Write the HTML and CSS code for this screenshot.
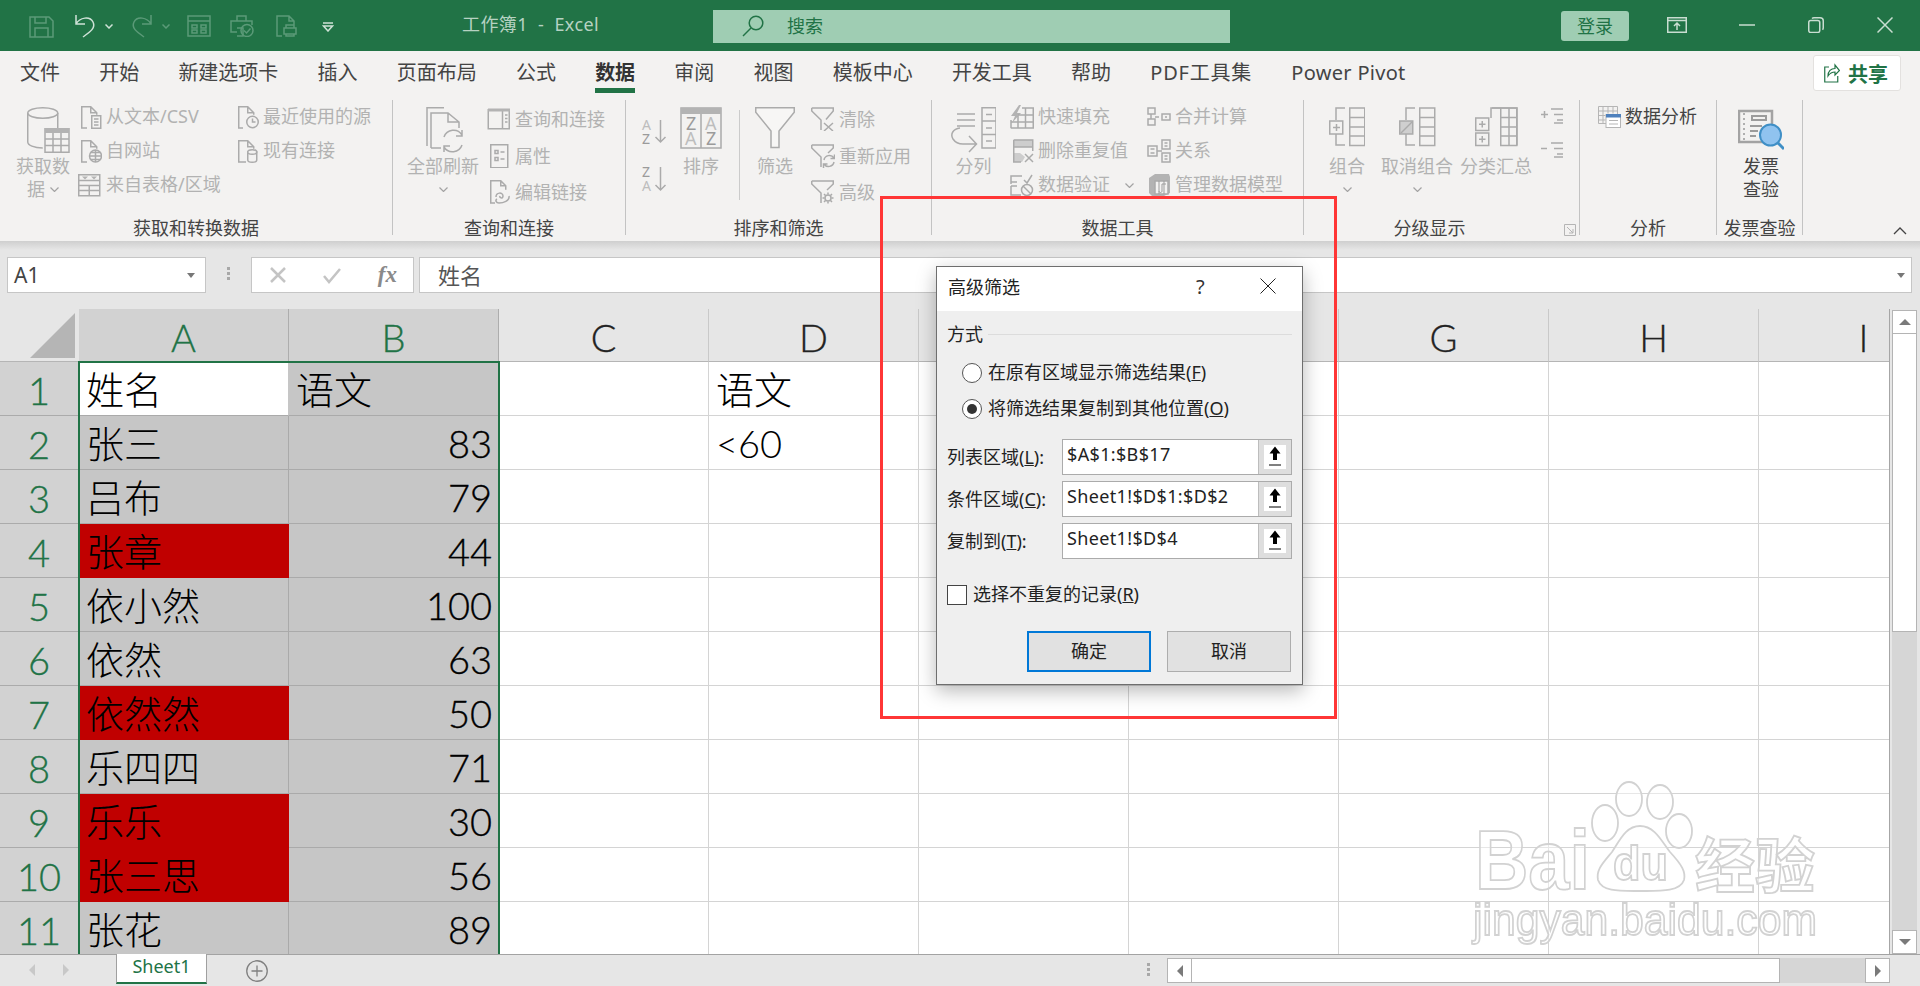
FILE: index.html
```html
<!DOCTYPE html>
<html lang="zh-CN">
<head>
<meta charset="utf-8">
<title>工作簿1 - Excel</title>
<link rel="stylesheet" href="styles.css">
</head>
<body>
<div class="app">
  <header class="titlebar">
    <svg class="qi dim q-save" viewBox="0 0 25 22"><path d="M1 1h19l4 4v16H1z M6 1v6h11V1 M6 21v-9h13v9"/></svg>
    <svg class="qi lit q-undo" viewBox="0 0 23 24"><path d="M3 1v9h9 M3 10C7 3 17 2 20 8c3 6-3 10-10 15"/></svg>
    <svg class="qc lit q-c1" viewBox="0 0 8 5"><path d="M.5.5L4 4 7.5.5"/></svg>
    <svg class="qi dim q-redo" viewBox="0 0 23 24"><path d="M20 1v9h-9 M20 10C16 3 6 2 3 8c-3 6 3 10 10 15"/></svg>
    <svg class="qc dim q-c2" viewBox="0 0 8 5"><path d="M.5.5L4 4 7.5.5"/></svg>
    <svg class="qi dim q-form" viewBox="0 0 24 22"><path d="M1 1h22v20H1z M1 6h22 M5 10h5v3H5z M14 10h5v3h-5z M5 15h5v3H5z M14 15h5v3h-5z"/></svg>
    <svg class="qi dim q-print" viewBox="0 0 24 22"><path d="M7 6V1h9v5 M7 17H1V6h21v4 M7 13h6v8H7"/><circle cx="17" cy="15.500" r="6"/><path d="M14 15.500l2.500 2.500 4-4.500"/></svg>
    <svg class="qi dim q-prev" viewBox="0 0 21 22"><path d="M8 1H1v20h5 M8 1h5l5 5v4 M13 1v5h5 M8 13h12v6H8z M10 13v-3h8v3 M10 19v2h8v-2"/></svg>
    <svg class="qc2 q-cust" viewBox="0 0 12 10"><path class="qline" d="M1 1h10"/><path class="qtri" d="M1.500 4h9L6 9z"/></svg>
    <div class="wintitle">工作簿1  -  Excel</div>
    <div class="search">
      <svg class="search-ic" viewBox="0 0 22 22"><circle cx="14" cy="8" r="6.800"/><path d="M9 13L1 21"/></svg>
      <span>搜索</span>
    </div>
    <div class="login">登录</div>
    <svg class="wi w-disp" viewBox="0 0 20 16"><path d="M.750.750h18.500v14.500H.750z M.750 3.500h18.500 M10 13V6.500 M7 9l3-3 3 3"/></svg>
    <svg class="wi w-min" viewBox="0 0 16 16"><path d="M0 8h16"/></svg>
    <svg class="wi w-res" viewBox="0 0 16 16"><rect x=".75" y="3.500" width="11" height="12" rx="2"/><path d="M4 1.500c.5-.5 1-.75 2-.75h6c2 0 3.250 1.250 3.250 3v7c0 1-.25 1.500-.75 2"/></svg>
    <svg class="wi w-close" viewBox="0 0 16 16"><path d="M.5.5l15 15 M15.500.5l-15 15"/></svg>
  </header>

  <nav class="tabs">
    <span class="tab">文件</span>
    <span class="tab">开始</span>
    <span class="tab">新建选项卡</span>
    <span class="tab">插入</span>
    <span class="tab">页面布局</span>
    <span class="tab">公式</span>
    <span class="tab active">数据</span>
    <span class="tab">审阅</span>
    <span class="tab">视图</span>
    <span class="tab">模板中心</span>
    <span class="tab">开发工具</span>
    <span class="tab">帮助</span>
    <span class="tab t-pdf">PDF工具集</span>
    <span class="tab t-pp">Power Pivot</span>
    <div class="share">
      <svg class="share-ic" viewBox="0 0 16 20"><path d="M5 4H.75v15h13v-6 M4 13c0-5 3-7.500 7-7.500V2l4.500 5.500L11 12V9c-3 0-5 1-7 4z"/></svg>
      <span>共享</span>
    </div>
  </nav>

  <section class="ribbon">
    <div class="group g1">
      <div class="gbody">
        <div class="big b-get">
          <svg class="ic" width="54" height="49" viewBox="0 0 54 49"><path d="M11.750 6v29c0 3 6 6 15 6 M41.750 6v15"/><ellipse cx="26.750" cy="6" rx="15" ry="5.250"/><rect x="29" y="21.750" width="24" height="23.500" class="pane"/><path class="solid" d="M29 21h24v5H29z"/><path d="M29 32h24 M29 38.500h24 M37 26v19 M45 26v19"/></svg>
          <span class="bt">获取数</span>
          <span class="bt">据 <svg class="chev" viewBox="0 0 9 5"><path d="M.5.5L4.500 4.500 8.500.5"/></svg></span>
        </div>
        <div class="col c-g1a">
          <div class="ri"><svg class="ic" width="24" height="24" viewBox="0 0 24 24"><path d="M9 23H3.750V1.750h9l6 6v2 M12.750 1.750v6h6"/><rect x="13.750" y="10.750" width="9" height="12.500" class="pane"/><path d="M16 14h4.500 M16 17h4.500 M16 20h4.500"/></svg><span>从文本/CSV</span></div>
          <div class="ri"><svg class="ic" width="24" height="24" viewBox="0 0 24 24"><path d="M9 23H3.750V1.750h9l6 6v2 M12.750 1.750v6h6"/><circle cx="17.500" cy="17" r="6" class="pane"/><path d="M11.500 17h12 M17.500 11v12 M13 13.500h9 M13 20.500h9"/></svg><span>自网站</span></div>
          <div class="ri"><svg class="ic" width="24" height="24" viewBox="0 0 24 24"><path d="M.750 1.750h21v21h-21z M.750 7.500h21 M.750 12.500h21 M.750 17.500h21 M11.250 12.500v10"/><path class="solid" d="M4 3.500h6L7 6.500z M13 3.500h6L16 6.500z"/></svg><span>来自表格/区域</span></div>
        </div>
        <div class="col c-g1b">
          <div class="ri r21"><svg class="ic" width="21" height="24" viewBox="0 0 21 24"><path d="M5 23H.75V1.750h9l6 6v2 M9.750 1.750v6h6"/><circle cx="14.500" cy="17" r="5.750" class="pane"/><path d="M14.500 13.500V17h3"/></svg><span>最近使用的源</span></div>
          <div class="ri r21"><svg class="ic" width="21" height="24" viewBox="0 0 21 24"><path d="M8 23H.75V1.750h9l6 6v2 M9.750 1.750v6h6"/><path class="pane" d="M9.750 13v8c0 1.500 2 2.250 4.500 2.250s4.500-.75 4.500-2.250v-8z"/><ellipse cx="14.250" cy="13" rx="4.500" ry="2.250" class="pane"/></svg><span>现有连接</span></div>
        </div>
      </div>
      <div class="glabel">获取和转换数据</div>
    </div>

    <div class="group g2">
      <div class="gbody">
        <div class="big b-refresh">
          <svg class="ic" width="72" height="49" viewBox="0 0 72 49"><path d="M20 39V.75h17 M24 41V6h17l11 9v6 M41 6v9h11 M24 41h10"/><path d="M37 30a10 10 0 0 1 18-2 M55 38a10 10 0 0 1-18 2 M55 23v6h-6 M37 45v-6h6"/></svg>
          <span class="bt">全部刷新</span>
          <span class="bt"><svg class="chev" viewBox="0 0 9 5"><path d="M.5.5L4.500 4.500 8.500.5"/></svg></span>
        </div>
        <div class="col c-g2 sp">
          <div class="ri"><svg class="ic" width="24" height="24" viewBox="0 0 24 24"><path d="M1.250 2.750h21v19h-21z M15.500 3v19"/><path class="solid" d="M1 1.500h22v3H1z"/><path d="M18 8h2.500 M18 11.500h2.500 M18 15h2.500"/></svg><span>查询和连接</span></div>
          <div class="ri"><svg class="ic" width="24" height="24" viewBox="0 0 24 24"><path d="M3.750 .75h17v23h-17z M13.500 8h4 M13.500 15h4"/><path d="M8 6.500h3v3H8z M8 13.500h3v3H8z"/></svg><span>属性</span></div>
          <div class="ri"><svg class="ic" width="24" height="24" viewBox="0 0 24 24"><path d="M8 23H3.750V.75h10l5 5v4 M13.750.75v5h5"/><path d="M9 17c0-5 7-5 7-1 0 3-4 2-3 0 M22 16c1 5-6 7-10 7-3 0-4-3-2-4"/></svg><span>编辑链接</span></div>
        </div>
      </div>
      <div class="glabel">查询和连接</div>
    </div>

    <div class="group g3">
      <div class="gbody">
        <div class="sortcol">
          <svg class="ic az" width="25" height="26" viewBox="0 0 25 26"><text x="0" y="11" class="lt la">A</text><text x="0" y="25" class="lt ld">Z</text><path d="M18.500 1v22 M13.500 18l5 5 5-5"/></svg>
          <svg class="ic az" width="25" height="26" viewBox="0 0 25 26"><text x="0" y="11" class="lt ld">Z</text><text x="0" y="25" class="lt la">A</text><path d="M18.500 1v23 M13.500 19l5 5 5-5"/></svg>
        </div>
        <div class="big b-sort">
          <svg class="ic az" width="42" height="49" viewBox="0 0 42 49"><path d="M1 1h40v40H1z M21 1v40"/><path class="solid" d="M1 1h40v6H1z"/><text x="6" y="23" class="lt2 ld">Z</text><text x="5" y="38" class="lt2 la">A</text><text x="25" y="23" class="lt2 la">A</text><text x="26" y="38" class="lt2 ld">Z</text></svg>
          <span class="bt">排序</span>
        </div>
        <div class="innersep"></div>
        <div class="big b-filter">
          <svg class="ic" width="40" height="49" viewBox="0 0 40 49"><path class="pane2" d="M.75 .75h38.500v4.500L24 24v16.500h-8V24L.75 5.250z"/></svg>
          <span class="bt">筛选</span>
        </div>
        <div class="col c-g3 sp">
          <div class="ri"><svg class="ic" width="24" height="24" viewBox="0 0 24 24"><path d="M.75 1h21.500v3L15 12.500 M10 23V13L.75 4V1"/><path d="M13 16l9 8 M22 16l-9 8"/></svg><span>清除</span></div>
          <div class="ri"><svg class="ic" width="24" height="24" viewBox="0 0 24 24"><path d="M.75 1h21.500v3L17 9 M10 23V13L.75 4V1"/><path d="M13 16a5.500 5.500 0 0 1 10-2 M23 18a5.500 5.500 0 0 1-10 2 M23.500 10.500v4h-4 M12.500 24v-4h4"/></svg><span>重新应用</span></div>
          <div class="ri"><svg class="ic" width="24" height="24" viewBox="0 0 24 24"><path d="M.75 1h21.500v3L16 10 M10 23V13L.75 4V1"/><circle cx="17" cy="18" r="3" /><path d="M17 12.500v2 M17 21.500v2 M11.500 18h2 M20.500 18h2 M13 14l1.500 1.500 M19.500 20.500L21 22 M21 14l-1.500 1.500 M14.500 20.500L13 22"/></svg><span>高级</span></div>
        </div>
      </div>
      <div class="glabel">排序和筛选</div>
    </div>

    <div class="group g4">
      <div class="gbody">
        <div class="big b-split">
          <svg class="ic" width="45" height="49" viewBox="0 0 45 49"><path d="M6 7h18 M6 13h18 M6 19h18"/><path d="M9 21C2 22-1 27 2 32c2 3 6 5 10 5h13 M18 29l7.500 8L18 45"/><path d="M31 .75h14V41H31z M31 14h14 M31 27.500h14 M35 7.500h6 M35 21h6 M35 34h6"/></svg>
          <span class="bt">分列</span>
        </div>
        <div class="col c-g4a">
          <div class="ri"><svg class="ic" width="24" height="24" viewBox="0 0 24 24"><path class="solid" d="M9 0L1 11h4l-3 7 9-10H7l4-8z"/><path d="M.75 23h22.500V3H12 M1 15v8 M8 11v12 M15.500 3v20 M1 17h22 M8 10h15"/></svg><span>快速填充</span></div>
          <div class="ri"><svg class="ic" width="24" height="24" viewBox="0 0 24 24"><path class="soft" d="M3 .75h20V8H3z M3 14h7l5 4-3 5H3z"/><path d="M3.750 1h19v11 M3.750 1v22H11 M3.750 8h19 M15 15l8 8 M23 15l-8 8"/></svg><span>删除重复值</span></div>
          <div class="ri"><svg class="ic" width="24" height="24" viewBox="0 0 24 24"><path d="M12 3h-11v6h6 M1 9v2 M1 13h6 M1 13v9h10 M14 7l3 3 5-8"/><circle cx="17" cy="17" r="5.500"/><path d="M13 13l8 8"/></svg><span>数据验证</span><svg class="chev chev-v" viewBox="0 0 9 5"><path d="M.5.5L4.500 4.500 8.500.5"/></svg></div>
        </div>
        <div class="col c-g4b">
          <div class="ri"><svg class="ic" width="24" height="24" viewBox="0 0 24 24"><path d="M1 3h7v6H1z M1 14h7v6H1z M4 9v5 M8 12h4 M15 9h8v6h-8z M18 12h2"/></svg><span>合并计算</span></div>
          <div class="ri"><svg class="ic" width="24" height="24" viewBox="0 0 24 24"><path d="M1 7h9v10H1z M3.500 10h4 M3.500 14h4 M10 12h5 M15 1h8v9h-8z M15 14h8v9h-8z M17.500 4h3 M17.500 7h3 M17.500 17h3 M17.500 20h3"/></svg><span>关系</span></div>
          <div class="ri"><svg class="ic" width="24" height="24" viewBox="0 0 24 24"><path class="solid" d="M2 5l6-4h14l1 3v16l-6 3H5l-3-3z"/><path class="pane" d="M8 8h13v13H8z"/><path class="thin" d="M15 11v7c0 2-3 2-3 0 M15 11h4 M12 8v13 M17 8v13"/></svg><span>管理数据模型</span></div>
        </div>
      </div>
      <div class="glabel">数据工具</div>
    </div>

    <div class="group g5">
      <div class="gbody">
        <div class="big b-grp">
          <svg class="ic" width="36" height="49" viewBox="0 0 36 49"><path d="M16 1h-9v12 M7 27v11h9"/><rect x="20.750" y="1" width="15" height="37.500" class="pane"/><path d="M21 10.500h15 M21 20h15 M21 29h15"/><rect x=".75" y="14" width="13" height="13" class="pane"/><path d="M4 20.500h7 M7.500 17v7"/></svg>
          <span class="bt">组合</span>
          <span class="bt"><svg class="chev" viewBox="0 0 9 5"><path d="M.5.5L4.500 4.500 8.500.5"/></svg></span>
        </div>
        <div class="big b-ungrp">
          <svg class="ic" width="72" height="49" viewBox="0 0 72 49"><path d="M34 1h-9v12 M25 27v11h9"/><rect x="38.750" y="1" width="15" height="37.500" class="pane"/><path d="M39 10.500h15 M39 20h15 M39 29h15"/><rect x="18.750" y="14" width="13" height="13" class="solid2"/><path d="M20 26l11-11"/></svg>
          <span class="bt">取消组合</span>
          <span class="bt"><svg class="chev" viewBox="0 0 9 5"><path d="M.5.5L4.500 4.500 8.500.5"/></svg></span>
        </div>
        <div class="big b-sub">
          <svg class="ic" width="72" height="49" viewBox="0 0 72 49"><path d="M40 1h-9v10"/><rect x="32.750" y="1" width="24" height="37.500" class="pane0"/><rect x="40.750" y="1" width="16" height="37.500" class="pane"/><path d="M32 1h25v37.500"/><path d="M41 10.500h16 M41 20h16 M41 29h16 M49 1v37.500"/><rect x="15.750" y="11" width="13" height="12.500" class="pane"/><rect x="15.750" y="26" width="13" height="12.500" class="pane"/><path d="M19 17.250h6.500 M22.250 14v6.500 M19 32.250h6.500 M22.250 29v6.500"/></svg>
          <span class="bt">分类汇总</span>
        </div>
        <div class="outcol">
          <svg class="ic" width="22" height="16" viewBox="0 0 22 16"><path d="M0 6.500h7 M3.500 3v7 M10 1h12 M13 6.500h9 M16 12h6 M13 15h9"/></svg>
          <svg class="ic" width="22" height="16" viewBox="0 0 22 16"><path d="M0 6.500h6 M10 1h12 M13 6.500h9 M16 12h6 M13 15h9"/></svg>
        </div>
      </div>
      <div class="glabel gl-out">分级显示</div>
      <svg class="launcher" viewBox="0 0 12 12"><path d="M.5 11.500V.5h11v11z"/><path d="M3 3l6 6 M9 5v4H5"/></svg>
    </div>

    <div class="group g6">
      <div class="gbody">
        <div class="col c-g6 active-text">
          <div class="ri r22"><svg class="ic" width="23" height="24" viewBox="0 0 23 24"><path d="M.5 1.500h19v17H.5z M.5 6h19 M.5 10.500h7 M.5 15h7 M5 1.500v17 M10 1.500v7 M15 1.500v7"/><rect x="8" y="9.500" width="14.500" height="13" class="pane3"/><path class="bluebar" d="M8 9h15v3.500H8z"/><path d="M11 15.500h9 M11 19h9"/></svg><span>数据分析</span></div>
        </div>
      </div>
      <div class="glabel">分析</div>
    </div>

    <div class="group g7">
      <div class="gbody">
        <div class="big b-inv active-text">
          <svg class="inv" width="46" height="49" viewBox="0 0 46 49"><path class="inv-s" d="M31 35H1V4h33v13"/><path class="inv-d" d="M6 6v28"/><path class="inv-t" d="M14 9h14v4H14z M12 19h12 M12 24h8 M12 29h6"/><circle class="inv-c" cx="32.500" cy="28" r="10.500"/><path class="inv-h" d="M40 36l6 6"/></svg>
          <span class="bt">发票</span>
          <span class="bt">查验</span>
        </div>
      </div>
      <div class="glabel">发票查验</div>
    </div>
    <svg class="collapse" viewBox="0 0 14 8"><path d="M1 7l6-6 6 6"/></svg>
  </section>

  <section class="fbar">
    <div class="namebox"><span>A1</span><i class="caret"></i></div>
    <div class="fdots"><i></i><i></i><i></i></div>
    <div class="fbtns">
      <svg class="fb-ic" viewBox="0 0 18 18"><path d="M2 2l14 14 M16 2L2 16"/></svg>
      <svg class="fb-ic" viewBox="0 0 18 18"><path d="M1 10l5 6L17 3"/></svg>
      <span class="fx">fx</span>
    </div>
    <div class="finput"><span>姓名</span><i class="caret"></i></div>
  </section>

  <main class="workarea">
    <div class="sheet">
      <div class="corner"><svg viewBox="0 0 45 45"><path d="M45 0v45H0z"/></svg></div>
      <div class="ch sel">A</div><div class="ch sel">B</div><div class="ch">C</div><div class="ch">D</div><div class="ch">E</div><div class="ch">F</div><div class="ch">G</div><div class="ch">H</div><div class="ch">I</div>

      <div class="rh">1</div><div class="c active-cell txt">姓名</div><div class="c s txt">语文</div><div class="c"></div><div class="c txt">语文</div><div class="c"></div><div class="c"></div><div class="c"></div><div class="c"></div><div class="c"></div>
      <div class="rh">2</div><div class="c s txt">张三</div><div class="c s num">83</div><div class="c"></div><div class="c txt">&lt;60</div><div class="c"></div><div class="c"></div><div class="c"></div><div class="c"></div><div class="c"></div>
      <div class="rh">3</div><div class="c s txt">吕布</div><div class="c s num">79</div><div class="c"></div><div class="c"></div><div class="c"></div><div class="c"></div><div class="c"></div><div class="c"></div><div class="c"></div>
      <div class="rh">4</div><div class="c red txt">张章</div><div class="c s num">44</div><div class="c"></div><div class="c"></div><div class="c"></div><div class="c"></div><div class="c"></div><div class="c"></div><div class="c"></div>
      <div class="rh">5</div><div class="c s txt">依小然</div><div class="c s num">100</div><div class="c"></div><div class="c"></div><div class="c"></div><div class="c"></div><div class="c"></div><div class="c"></div><div class="c"></div>
      <div class="rh">6</div><div class="c s txt">依然</div><div class="c s num">63</div><div class="c"></div><div class="c"></div><div class="c"></div><div class="c"></div><div class="c"></div><div class="c"></div><div class="c"></div>
      <div class="rh">7</div><div class="c red txt">依然然</div><div class="c s num">50</div><div class="c"></div><div class="c"></div><div class="c"></div><div class="c"></div><div class="c"></div><div class="c"></div><div class="c"></div>
      <div class="rh">8</div><div class="c s txt">乐四四</div><div class="c s num">71</div><div class="c"></div><div class="c"></div><div class="c"></div><div class="c"></div><div class="c"></div><div class="c"></div><div class="c"></div>
      <div class="rh">9</div><div class="c red txt">乐乐</div><div class="c s num">30</div><div class="c"></div><div class="c"></div><div class="c"></div><div class="c"></div><div class="c"></div><div class="c"></div><div class="c"></div>
      <div class="rh">10</div><div class="c red txt">张三思</div><div class="c s num">56</div><div class="c"></div><div class="c"></div><div class="c"></div><div class="c"></div><div class="c"></div><div class="c"></div><div class="c"></div>
      <div class="rh">11</div><div class="c s txt">张花</div><div class="c s num">89</div><div class="c"></div><div class="c"></div><div class="c"></div><div class="c"></div><div class="c"></div><div class="c"></div><div class="c"></div>
      <div class="selbox"></div>
    </div>
    <div class="vscroll">
      <div class="sb-btn"><i class="tri up"></i></div>
      <div class="vthumb"></div>
      <div class="vtrack"></div>
      <div class="sb-btn"><i class="tri down"></i></div>
    </div>
  </main>

  <footer class="tabbar">
    <div class="navs"><i class="tri left dimtri"></i><i class="tri right dimtri"></i></div>
    <div class="sheettab">Sheet1</div>
    <svg class="addsheet" viewBox="0 0 22 22"><circle cx="11" cy="11" r="10.250"/><path d="M5.500 11h11 M11 5.500v11"/></svg>
    <div class="grow"></div>
    <div class="hdots"><i></i><i></i><i></i></div>
    <div class="hscroll">
      <div class="sb-btn h"><i class="tri left"></i></div>
      <div class="hthumb"></div>
      <div class="grow"></div>
      <div class="sb-btn h"><i class="tri right"></i></div>
    </div>
  </footer>

  <svg class="watermark" viewBox="0 0 350 170">
    <text x="5" y="109" class="wm-b" textLength="115" lengthAdjust="spacingAndGlyphs">Bai</text>
    <ellipse cx="135" cy="43" rx="13" ry="18"/>
    <ellipse cx="159" cy="19" rx="13" ry="17"/>
    <ellipse cx="190" cy="22" rx="13" ry="17"/>
    <ellipse cx="209" cy="51" rx="13" ry="17"/>
    <path d="M170 46C185 46 192 62 200 72C212 85 216 92 214 100C210 112 190 111 170 111C150 111 132 112 128 100C126 90 132 84 142 72C150 60 156 46 170 46Z"/>
    <text x="143" y="100" class="wm-d" textLength="55" lengthAdjust="spacingAndGlyphs">du</text>
    <text x="225" y="108" class="wm-c">经验</text>
    <text x="3" y="155" class="wm-u" textLength="344" lengthAdjust="spacingAndGlyphs">jingyan.baidu.com</text>
  </svg>

  <div class="redbox"></div>

  <div class="dialog">
    <div class="dlg-title">
      <span class="dlg-name">高级筛选</span>
      <span class="dlg-help">?</span>
      <svg class="dlg-close" viewBox="0 0 16 16"><path d="M.5.5l15 15 M15.500.5l-15 15"/></svg>
    </div>
    <div class="dlg-body">
      <div class="legend"><span>方式</span><i></i></div>
      <div class="radios">
        <label class="radio"><i class="rb"></i><span>在原有区域显示筛选结果(<u>F</u>)</span></label>
        <label class="radio"><i class="rb on"></i><span>将筛选结果复制到其他位置(<u>O</u>)</span></label>
      </div>
      <div class="fields">
        <div class="field"><span class="flabel">列表区域(<u>L</u>):</span><div class="fbox"><span class="fval">$A$1:$B$17</span><div class="refbtn"><svg viewBox="0 0 22 23"><path class="refa" d="M11 1l5.500 7H13v6.500H9V8H5.500z"/><path class="refl" d="M5 19.500h12"/></svg></div></div></div>
        <div class="field"><span class="flabel">条件区域(<u>C</u>):</span><div class="fbox"><span class="fval">Sheet1!$D$1:$D$2</span><div class="refbtn"><svg viewBox="0 0 22 23"><path class="refa" d="M11 1l5.500 7H13v6.500H9V8H5.500z"/><path class="refl" d="M5 19.500h12"/></svg></div></div></div>
        <div class="field"><span class="flabel">复制到(<u>T</u>):</span><div class="fbox"><span class="fval">Sheet1!$D$4</span><div class="refbtn"><svg viewBox="0 0 22 23"><path class="refa" d="M11 1l5.500 7H13v6.500H9V8H5.500z"/><path class="refl" d="M5 19.500h12"/></svg></div></div></div>
      </div>
      <label class="check"><i class="cb"></i><span>选择不重复的记录(<u>R</u>)</span></label>
      <div class="dlg-btns">
        <div class="dbtn primary">确定</div>
        <div class="dbtn">取消</div>
      </div>
    </div>
  </div>
</div>
</body>
</html>
```

FILE: styles.css
```css
*{box-sizing:border-box}
html,body{margin:0;padding:0;height:100%;overflow:hidden}
body{font-family:"Noto Sans","Noto Sans CJK SC",sans-serif;color:#444}
i{display:block;font-style:normal}
svg{display:block;flex:none}
.app{position:relative;width:1920px;height:986px;overflow:hidden;background:#e6e6e6;display:flex;flex-direction:column}

/* title bar */
.titlebar{height:51px;background:#217346;display:flex;align-items:center;padding-left:29px;flex:none}
.qi{fill:none;stroke-width:1.500;height:22px}
.qi.dim,.qc.dim{stroke:#5b9a78}
.qi.lit,.qc.lit{stroke:#cfe2d7}
.qc{fill:none;stroke-width:1.500;width:8px;height:5px}
.q-save{width:25px;margin-top:3px}
.q-undo{width:23px;height:24px;margin-left:19px}
.q-c1{margin-left:9px;margin-top:2px}
.q-redo{width:23px;height:24px;margin-left:18px}
.q-c2{margin-left:8px;margin-top:2px}
.q-form{width:24px;margin-left:17px}
.q-print{width:24px;margin-left:19px}
.q-prev{width:21px;margin-left:22px}
.qc2{width:12px;height:10px;margin-left:25px;margin-top:2px}
.qline{fill:none;stroke:#cfe2d7;stroke-width:1.500}
.qtri{fill:none;stroke:#cfe2d7;stroke-width:1.500}
.wintitle{width:251px;margin-left:128px;font-size:18px;color:#b6d2c2;white-space:pre;margin-top:-5px;letter-spacing:.4px}
.search{width:517px;height:33px;background:#9fcdb3;display:flex;align-items:center;padding-left:29px;font-size:18px;color:#217346;margin-top:1px}
.search-ic{width:22px;height:22px;fill:none;stroke:#217346;stroke-width:1.500}
.search span{margin-left:23px;margin-bottom:2px}
.login{width:68px;height:30px;margin-left:331px;background:#9fcdb3;border-radius:3px;color:#217346;font-size:18px;line-height:30px;text-align:center}
.wi{fill:none;stroke:#c9ddd1;stroke-width:1.500}
.w-disp{width:20px;height:16px;margin-left:38px;margin-top:-1px}
.w-min{width:16px;height:16px;margin-left:52px;margin-top:-2px}
.w-res{width:16px;height:16px;margin-left:53px;margin-top:-1px}
.w-close{width:16px;height:16px;margin-left:53px;margin-top:-1px}

/* tabs */
.tabs{height:42px;background:#f3f2f1;display:flex;gap:39.200px;padding-left:20px;flex:none}
.tab{font-size:20px;line-height:24px;padding-top:10px;padding-bottom:3px;border-bottom:5px solid transparent;white-space:nowrap;color:#444;height:42px}
.tab.active{font-weight:700;color:#333;border-bottom-color:#217346}
.t-pdf{letter-spacing:.8px}
.t-pp{letter-spacing:.3px}
.share{margin-left:auto;margin-right:19px;margin-top:4px;width:88px;height:36px;background:#fff;border:1px solid #e3e1df;border-radius:3px;display:flex;align-items:center;padding-left:10px;color:#217346;font-weight:700;font-size:20px}
.share-ic{width:16px;height:20px;fill:none;stroke:#217346;stroke-width:1.200}
.share span{margin-left:8px}

/* ribbon */
.ribbon{position:relative;height:148px;background:#f3f2f1;display:flex;padding-top:7px;flex:none;font-size:18px;color:#b2b2b2}
.group{position:relative;height:135px;border-right:1px solid #c3c3c3}
.g1{width:393px}.g2{width:233px}.g3{width:306px}.g4{width:372px}.g5{width:276px}.g6{width:137px}.g7{width:86px}
.gbody{display:flex;height:116px}
.glabel{height:19px;line-height:24px;text-align:center;color:#444;white-space:nowrap}
.gl-out{padding-right:24px}
.big{display:flex;flex-direction:column;align-items:center;padding-top:7px;white-space:nowrap;flex:none}
.big svg.ic,.big svg.inv{margin-bottom:-1px}
.bt{display:flex;align-items:center;justify-content:center;gap:5px;height:23px;line-height:23px}
.chev{width:9px;height:5px;fill:none;stroke:#a3a3a3;stroke-width:1.200}
.chev-v{margin-left:11px}
.ic{fill:none;stroke:#ababab;stroke-width:1.500}
.az{overflow:visible}
.ic .solid{fill:#b3b3b3;stroke:none}
.ic .soft{fill:#cdcdcd;stroke:none}
.ic .thin{stroke:#9d9d9d;stroke-width:1}
.ic .pane{fill:#f3f2f1}
.ic .pane0{fill:none;stroke:none}
.ic .pane2{fill:#f7f6f5}
.ic .pane3{fill:#fff}
.ic .solid2{fill:#cfcfcf}
.ic .bluebar{fill:#4f81bd;stroke:none}
.ic text{stroke:none;font-family:"Noto Sans",sans-serif}
.lt{font-size:14px}
.lt2{font-size:18px}
.la{fill:#bdbdbd}
.ld{fill:#9b9b9b}
.col{display:flex;flex-direction:column;flex:none}
.ri{display:flex;align-items:center;gap:4px;height:34px;white-space:nowrap}
.ri span{margin-bottom:4px}
.col.sp{padding-top:1px}
.col.sp .ri{height:36.500px}
.col.sp .ri span{margin-bottom:2px}
.active-text{color:#444}
.b-get{width:54px;margin-left:16px}
.c-g1a{width:160px;margin-left:8px}
.c-g1b{width:130px}
.b-refresh{width:72px;margin-left:14px}
.c-g2{margin-left:8px}
.sortcol{width:25px;margin-left:16px;padding-top:19px;display:flex;flex-direction:column;gap:21px}
.b-sort{width:42px;margin-left:13px}
.innersep{width:1px;height:90px;margin:10px 0 0 17px;background:#cbcbcb}
.b-filter{width:40px;margin-left:15px}
.c-g3{margin-left:16px}
.b-split{width:45px;margin-left:19px}
.c-g4a{width:137px;margin-left:14px}
.c-g4b{width:140px}
.b-grp{width:36px;margin-left:25px}
.b-ungrp{width:72px;margin-left:16px}
.b-sub{width:72px;margin-left:7px}
.outcol{margin-left:9px;padding-top:8px;display:flex;flex-direction:column;gap:18px}
.launcher{position:absolute;right:3px;top:124px;width:12px;height:12px;fill:none;stroke:#b5b5b5;stroke-width:1}
.c-g6{margin-left:18px}
.r22 .ic{stroke:#b5b5b5;stroke-width:1}
.b-inv{width:46px;margin-left:21px}
.inv-s{fill:none;stroke:#a3a3a3;stroke-width:2.500}
.inv-d{fill:none;stroke:#999;stroke-width:1.500;stroke-dasharray:2 3}
.inv-t{fill:none;stroke:#9c9c9c;stroke-width:2}
.inv-c{fill:#90c3ef;stroke:#3f8fc6;stroke-width:2}
.inv-h{fill:none;stroke:#3f8fc6;stroke-width:3}
.collapse{position:absolute;right:13px;top:134px;width:14px;height:8px;fill:none;stroke:#444;stroke-width:1.300}

/* formula bar */
.fbar{height:68px;flex:none;padding:16px 8px 0 7px;display:flex;background:linear-gradient(#cfcfcf,#e6e6e6 9px,#e6e6e6)}
.namebox{width:199px;height:36px;background:#fff;border:1px solid #c6c6c6;display:flex;align-items:center;justify-content:space-between;padding:0 10px 0 6px;font-size:21px;color:#444}
.caret{width:0;height:0;border-left:4.500px solid transparent;border-right:4.500px solid transparent;border-top:5px solid #777}
.fdots{width:45px;padding-top:10px;display:flex;flex-direction:column;align-items:center;gap:2px}
.fdots i,.hdots i{width:3px;height:3px;background:#a8a8a8}
.fbtns{width:163px;height:36px;background:#fff;border:1px solid #c6c6c6;display:flex;align-items:center;padding:0 16px 0 17px;justify-content:space-between}
.fb-ic{width:18px;height:18px;fill:none;stroke:#c4c4c4;stroke-width:2.500}
.fx{font-family:"Liberation Serif",serif;font-style:italic;font-weight:700;font-size:23px;color:#8a8a8a;line-height:30px}
.finput{width:1493px;margin-left:5px;height:36px;background:#fff;border:1px solid #c6c6c6;display:flex;align-items:center;justify-content:space-between;padding:0 6px 0 18px;font-size:22px;color:#555}
.finput span{margin-bottom:2px}

/* sheet */
.workarea{height:645px;display:flex;flex:none}
.sheet{position:relative;width:1890px;height:645px;overflow:hidden;background:#fff;border-right:1px solid #a6a6a6;display:grid;grid-template-columns:79px repeat(9,210px);grid-template-rows:53px repeat(11,54px);font-family:Lato,"Noto Sans CJK SC",sans-serif}
.corner{background:#e6e6e6;border-bottom:1px solid #b5b5b5;padding:4px 0 0 30px}
.corner svg{width:45px;height:45px;fill:#b5b5b5}
.ch{background:#e6e6e6;border-right:1px solid #c9c9c9;border-bottom:1px solid #b5b5b5;text-align:center;font-size:38px;line-height:56px;color:#222;font-weight:300;-webkit-text-stroke:.35px currentColor;overflow:hidden}
.ch.sel{background:#d2d2d2;color:#217346;border-right-color:#adadad}
.rh{background:#d2d2d2;border-bottom:1px solid #ababab;border-right:1px solid #b0b0b0;text-align:center;font-size:38px;line-height:56px;color:#217346;font-weight:300;-webkit-text-stroke:.35px currentColor;overflow:hidden}
.c{border-right:1px solid #d4d4d4;border-bottom:1px solid #d4d4d4;font-size:38px;line-height:54px;color:#000;overflow:hidden;white-space:nowrap;font-family:Lato,"Noto Sans CJK SC",sans-serif;font-weight:300}
.txt{padding-left:7px}
.num{text-align:right;padding-right:6px;-webkit-text-stroke:.35px #000}
.c.s{background:#c6c6c6;border-right-color:#aaa;border-bottom-color:#aaa}
.c.red{background:#c00000;border-right-color:#c00000;border-bottom-color:#c00000}
.c.active-cell{background:#fff;border-right-color:#c6c6c6;border-bottom-color:#aaa}
.selbox{position:absolute;left:78px;top:52px;width:422px;height:600px;border:2px solid #217346}
.vscroll{width:30px;height:645px;padding:1px 3px 0 2px;display:flex;flex-direction:column}
.sb-btn{flex:none;width:25px;height:24px;background:#fff;border:1px solid #b4b4b4;display:flex;align-items:center;justify-content:center}
.vthumb{height:298px;background:#fff;border:1px solid #b4b4b4;border-top:none;flex:none}
.vtrack{flex:1;background:#d6d6d6}
.tri{width:0;height:0}
.tri.up{border-left:6px solid transparent;border-right:6px solid transparent;border-bottom:6px solid #7a7a7a}
.tri.down{border-left:6px solid transparent;border-right:6px solid transparent;border-top:6px solid #7a7a7a}
.tri.left{border-top:6px solid transparent;border-bottom:6px solid transparent;border-right:6px solid #7a7a7a}
.tri.right{border-top:6px solid transparent;border-bottom:6px solid transparent;border-left:6px solid #7a7a7a}
.tri.left.dimtri{border-right-color:#c8c8c8}
.tri.right.dimtri{border-left-color:#c8c8c8}

/* sheet tabs */
.tabbar{height:32px;flex:none;display:flex;align-items:flex-start;background:#e6e6e6;border-top:1px solid #a3a3a3;margin-top:0}
.navs{width:116px;height:31px;padding:9px 0 0 29px;display:flex;gap:28px}
.sheettab{width:91px;height:30px;margin-top:-1px;background:#fff;border:1px solid #a0a0a0;border-top:none;border-bottom:2px solid #217346;color:#217346;font-size:18px;line-height:25px;text-align:center}
.addsheet{width:22px;height:22px;margin:5px 0 0 39px;fill:none;stroke:#808080;stroke-width:1.300}
.grow{flex:1}
.hdots{display:flex;flex-direction:column;gap:2px;padding-top:8px;margin-right:17px}
.hdots i{width:3px;height:3px}
.hscroll{width:723px;height:25px;margin:3px 30px 0 0;background:#d6d6d6;display:flex}
.sb-btn.h{height:25px}
.hthumb{width:588px;height:25px;background:#fff;border:1px solid #b4b4b4;border-left:none}

/* watermark */
.watermark{position:absolute;left:1470px;top:780px;width:350px;height:170px;fill:rgba(255,255,255,.45);stroke:#d2d2d2;stroke-width:1.800;filter:blur(.6px)}
.wm-b{font-family:"Liberation Sans",sans-serif;font-weight:700;font-size:84px}
.wm-d{font-family:"Liberation Sans",sans-serif;font-weight:700;font-size:48px}
.wm-c{font-family:"Noto Sans CJK SC",sans-serif;font-weight:700;font-size:60px}
.wm-u{font-family:"Liberation Sans",sans-serif;font-size:45px}

/* annotation */
.redbox{position:absolute;left:880px;top:196px;width:457px;height:523px;border:3.500px solid #ff3636}

/* dialog */
.dialog{position:absolute;left:936px;top:266px;width:367px;height:419px;background:#efefef;border:1px solid #6e6e6e;box-shadow:0 6px 18px rgba(0,0,0,.28);font-size:18px;color:#222;display:flex;flex-direction:column}
.dlg-title{height:44px;background:#fff;display:flex;align-items:center;padding:0 0 6px 11px;flex:none}
.dlg-name{width:244px}
.dlg-help{width:68px;font-size:20px;color:#333;padding-left:4px}
.dlg-close{width:16px;height:16px;fill:none;stroke:#222;stroke-width:1}
.dlg-body{flex:1;padding:11px 10px 0 10px;display:flex;flex-direction:column}
.legend{display:flex;align-items:center;height:24px;line-height:24px}
.legend i{flex:1;height:1px;background:#dcdcdc;margin-left:5px}
.radios{margin-top:9px;padding-left:15px}
.radio{display:flex;align-items:center;gap:6px;height:36px;white-space:nowrap;line-height:24px}
.radio span{margin-bottom:2px}
.rb{width:20px;height:20px;border-radius:50%;border:1.500px solid #555;background:#fff;flex:none;display:flex;align-items:center;justify-content:center}
.rb.on::after{content:"";width:10px;height:10px;border-radius:50%;background:#333}
.fields{margin-top:12px;display:flex;flex-direction:column;gap:6px}
.field{display:flex;height:36px;align-items:center;white-space:nowrap}
.flabel{width:115px;line-height:24px}
.fbox{width:230px;height:36px;background:#fff;border:1px solid #ababab;display:flex;align-items:center;justify-content:space-between;padding-left:4px}
.fval{line-height:24px;margin-top:-6px;letter-spacing:.35px}
.refbtn{width:33px;height:34px;background:#dedede;border:1px solid #bdbdbd;border-width:0 0 0 1px;padding:5px;flex:none}
.refbtn svg{width:22px;height:24px;background:#fff}
.refa{fill:#000}
.refl{fill:none;stroke:#000;stroke-width:1}
.check{display:flex;align-items:center;gap:6px;height:20px;margin-top:26px;white-space:nowrap;line-height:24px}
.check span{margin-bottom:2px}
.cb{width:20px;height:20px;background:#fff;border:1px solid #444;flex:none}
.dlg-btns{display:flex;justify-content:flex-end;gap:16px;margin-top:26px;padding-right:1px}
.dbtn{width:124px;height:41px;background:#e1e1e1;border:1px solid #adadad;text-align:center;line-height:39px}
.dbtn.primary{border:2px solid #0078d7;line-height:37px}
```
